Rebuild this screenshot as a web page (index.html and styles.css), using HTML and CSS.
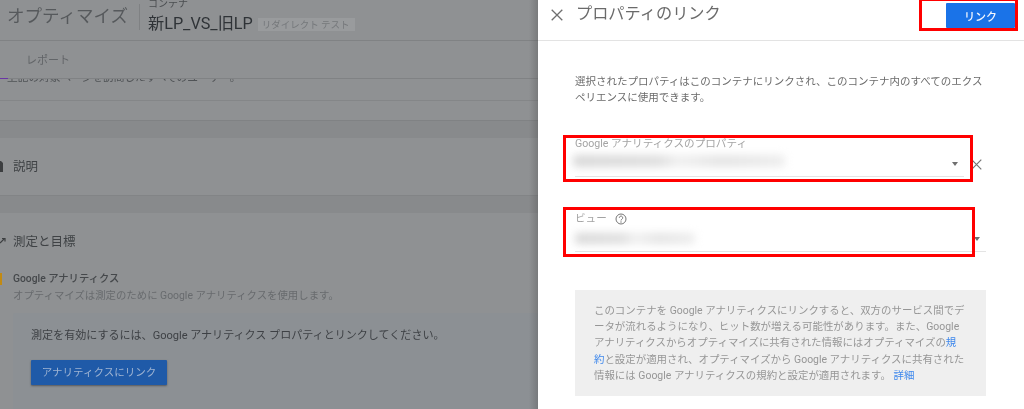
FILE: index.html
```html
<!DOCTYPE html>
<html lang="ja">
<head>
<meta charset="utf-8">
<title>プロパティのリンク</title>
<link rel="stylesheet" href="styles.css">
</head>
<body>
<div class="app">
  <main class="page">
    <header class="top">
      <div class="brand">オプティマイズ</div>
      <div class="divider"></div>
      <div class="crumb">
        <div class="crumb-label">コンテナ</div>
        <div class="crumb-main"><span class="crumb-name">新LP_VS_旧LP</span><span class="tag">リダイレクト テスト</span></div>
      </div>
    </header>
    <nav class="tabs"><span class="tab">レポート</span></nav>
    <div class="accent"></div>
    <div class="cut-row"><div class="cut-text">上記の対象ページを訪問したすべてのユーザー。</div></div>
    <div class="blank-row"></div>
    <div class="band"></div>
    <section class="section desc">
      <svg class="edge-icon" width="3" height="12" viewBox="0 0 3 12"><path d="M0 1h1l2 2v9H0z" fill="#3c3e40"/></svg>
      <span class="section-title">説明</span>
    </section>
    <div class="band"></div>
    <section class="measure">
      <div class="measure-head">
        <svg class="edge-icon" width="6" height="7" viewBox="0 0 6 7"><path d="M0 6l4-4M2 1.500h3v3" fill="none" stroke="#3c3e40" stroke-width="1.200"/></svg>
        <span class="section-title">測定と目標</span>
      </div>
      <div class="ga">
        <div class="ga-bar"></div>
        <div>
          <div class="ga-title">Google アナリティクス</div>
          <div class="ga-sub">オプティマイズは測定のために Google アナリティクスを使用します。</div>
        </div>
      </div>
      <div class="notice">
        <p class="notice-text">測定を有効にするには、Google アナリティクス プロパティとリンクしてください。</p>
        <span class="notice-btn">アナリティクスにリンク</span>
      </div>
    </section>
    <div class="page-shadow"></div>
  </main>

  <aside class="panel">
    <header class="panel-head">
      <svg class="close" width="12" height="12" viewBox="0 0 12 12"><path d="M.7.7l10.600 10.600M11.300.7L.7 11.300" stroke="#6f6f6f" stroke-width="1.300" fill="none"/></svg>
      <h1 class="panel-title">プロパティのリンク</h1>
      <button class="link-btn">リンク</button>
    </header>
    <div class="panel-body">
      <p class="intro">選択されたプロパティはこのコンテナにリンクされ、このコンテナ内のすべてのエクス<br>ペリエンスに使用できます。</p>
      <div class="field field-one">
        <div class="field-label">Google アナリティクスのプロパティ</div>
        <div class="field-value">
          <div class="smudge smudge-one"></div>
          <span class="caret"></span>
        </div>
        <svg class="field-clear" width="11" height="11" viewBox="0 0 11 11"><path d="M.7.7l9.600 9.600M10.300.7L.7 10.300" stroke="#757575" stroke-width="1.200" fill="none"/></svg>
      </div>
      <div class="field field-two">
        <div class="field-label">ビュー
          <svg class="help" width="12" height="12" viewBox="0 0 12 12"><circle cx="6" cy="6" r="5" fill="none" stroke="#757575" stroke-width="1"/><path d="M4.300 4.800a1.700 1.700 0 1 1 2.600 1.400c-.6.400-.9.700-.9 1.300" fill="none" stroke="#757575" stroke-width="1"/><circle cx="6" cy="9" r=".7" fill="#757575"/></svg>
        </div>
        <div class="field-value">
          <div class="smudge smudge-two"></div>
          <span class="caret"></span>
        </div>
      </div>
      <div class="info">このコンテナを Google アナリティクスにリンクすると、双方のサービス間でデ<br>ータが流れるようになり、ヒット数が増える可能性があります。また、Google<br>アナリティクスからオプティマイズに共有された情報にはオプティマイズの<a class="info-link">規<br>約</a>と設定が適用され、オプティマイズから Google アナリティクスに共有された<br>情報には Google アナリティクスの規約と設定が適用されます。 <a class="info-link">詳細</a></div>
    </div>
  </aside>
</div>
<div class="mark mark-btn"></div>
<div class="mark mark-one"></div>
<div class="mark mark-two"></div>
</body>
</html>
```
FILE: styles.css
```css
* { box-sizing: border-box; }
html, body { margin: 0; height: 100%; overflow: hidden; background: #fff; }
body { font-family: Roboto, "Noto Sans CJK JP", sans-serif; }
.app { display: flex; height: 409px; overflow: hidden; position: relative; filter: blur(.35px); }

/* dimmed page */
.page { width: 538px; flex: none; height: 409px; background: #8f9193; position: relative; overflow: hidden; }
.top { height: 41px; display: flex; align-items: flex-start; padding-left: 7px; border-bottom: 1px solid #808284; }
.brand { font-size: 17.500px; line-height: 20px; margin-top: 6px; color: #56595c; width: 120px; white-space: nowrap; }
.divider { width: 1px; height: 26px; margin: 4px 8px 0 12px; background: #7f8183; }
.crumb-label { font-size: 10px; line-height: 10px; margin-top: -1px; color: #4a4d50; }
.crumb-main { display: flex; align-items: center; margin-top: 4px; }
.crumb-name { font-size: 16.200px; line-height: 22px; color: #2f3337; white-space: nowrap; }
.tag { margin-left: 5px; padding: 0 4px; height: 13px; line-height: 13px; width: 97px; font-size: 9.500px; background: #999b9d; color: #75787b; white-space: nowrap; overflow: hidden; }
.tabs { height: 38px; padding: 0 0 2px 26px; border-bottom: 1px solid #808284; display: flex; align-items: center; }
.tab { font-size: 11px; color: #626568; }
.accent { position: absolute; left: 0; top: 78px; width: 8px; height: 1px; background: #6a35a5; }
.cut-row { height: 22px; padding-left: 7px; border-bottom: 1px solid #848688; overflow: hidden; }
.cut-text { font-size: 10.700px; line-height: 12px; margin-top: -7px; color: #505356; white-space: nowrap; }
.blank-row { height: 20px; border-bottom: 1px solid #808284; }
.band { height: 17px; background: #888a8c; }
.section { height: 58px; display: flex; align-items: center; padding: 0 8px 2px 0; border-bottom: 1px solid #828486; position: relative; }
.edge-icon { flex: none; margin-right: 10px; }
.section-title { font-size: 12.500px; color: #3f4245; }
.measure { padding-top: 18px; }
.measure-head { display: flex; align-items: center; height: 19px; }
.measure-head .edge-icon { margin-right: 7px; }
.ga { display: flex; margin-top: 22px; }
.ga-bar { width: 2px; height: 12px; margin: 1px 11px 0 0; background: #c28a12; }
.ga-title { font-size: 10.300px; line-height: 14px; font-weight: 500; color: #45484b; white-space: nowrap; }
.ga-sub { font-size: 10.400px; line-height: 14px; margin-top: 3px; color: #686b6e; white-space: nowrap; }
.notice { margin: 10px 0 0 13px; height: 100px; padding: 14px 18px; background: #8c9094; border-radius: 2px; }
.notice-text { margin: 0; font-size: 11.050px; line-height: 18px; color: #3e4145; white-space: nowrap; }
.notice-btn { display: block; width: 136px; height: 25px; margin-top: 15px; border-radius: 1px; background: #1f5aa8; color: #9fb4d2; font-size: 10.500px; line-height: 25px; text-align: center; box-shadow: 0 1px 2px rgba(50,50,55,.6); white-space: nowrap; }
.page-shadow { position: absolute; right: 0; top: 0; bottom: 0; width: 9px; background: linear-gradient(to right, rgba(70,70,70,0), rgba(70,70,70,.3)); }

/* side panel */
.panel { flex: 1; min-width: 0; background: #fff; }
.panel-head { height: 41px; display: flex; align-items: flex-start; border-bottom: 1px solid #e3e3e3; padding: 3px 9px 0 13px; }
.close { margin: 6px 13px 0 0; flex: none; }
.panel-title { flex: 1; margin: -1px 0 0; font-size: 16.200px; line-height: 24px; font-weight: 400; color: #6a6a6a; white-space: nowrap; }
.link-btn { width: 69px; height: 25px; border: 0; border-radius: 1px; padding: 0; background: #1a73e8; color: #f2f6fd; font-family: inherit; font-size: 11px; font-weight: 500; }
.panel-body { padding: 33px 38px 0 37px; }
.intro { margin: 0; width: 430px; height: 33px; font-size: 10.500px; line-height: 16px; color: #6b6b6b; white-space: nowrap; }
.field { position: relative; }
.field-one { margin-top: 30px; width: 389px; }
.field-two { margin-top: 35px; width: 411px; }
.field-label { font-size: 10.600px; line-height: 14px; height: 14px; color: #a3a3a3; display: flex; align-items: center; white-space: nowrap; }
.help { margin-left: 8px; }
.field-value { height: 26px; border-bottom: 1px solid #e4e4e4; display: flex; align-items: center; justify-content: space-between; }
.smudge { border-radius: 3px; background: linear-gradient(to right, #d8d8d8, #dedede 40%, #f0f0f0 50%, #e4e4e4 70%, #ededed); filter: blur(4px); }
.smudge-one { width: 212px; height: 12px; margin: -5px 0 0 -2px; }
.smudge-two { width: 120px; height: 11px; }
.caret { width: 0; height: 0; margin-right: 6px; border-left: 3.500px solid transparent; border-right: 3.500px solid transparent; border-top: 4px solid #6f6f6f; }
.field-clear { position: absolute; left: 396px; top: 22px; }
.info { margin-top: 38px; height: 106px; width: 411px; padding: 13px 10px 0 19px; background: #efefef; font-size: 10.450px; line-height: 16.200px; color: #969696; white-space: nowrap; }
.info-link { color: #3d87ec; }

/* red annotation boxes drawn on top of the screenshot */
.mark { position: absolute; border: 3px solid #ff0000; z-index: 5; pointer-events: none; }
.mark-btn { left: 919px; top: -2px; width: 99px; height: 33px; }
.mark-one { left: 563px; top: 135px; width: 410px; height: 47px; }
.mark-two { left: 563px; top: 207px; width: 412px; height: 50px; }
```
